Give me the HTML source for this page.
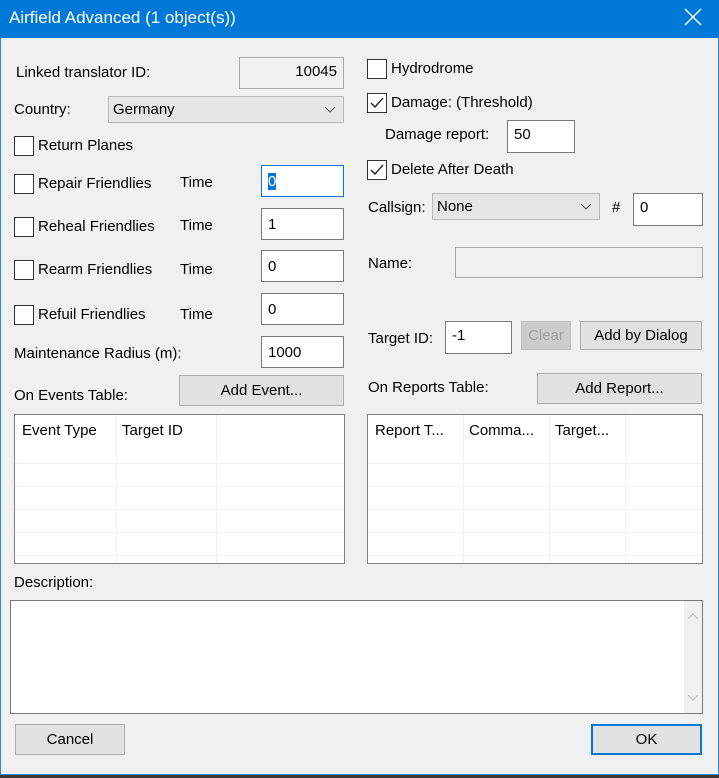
<!DOCTYPE html>
<html><head><meta charset="utf-8"><style>
*{box-sizing:border-box;margin:0;padding:0}
body{width:719px;height:778px;overflow:hidden;background:#3a3a3a;font-family:"Liberation Sans",sans-serif;font-size:15px;color:#000;position:relative}
#dlg{position:absolute;left:0;top:0;width:719px;height:775px;background:#f0f0f0;box-shadow:inset 0 0 0 1px #2b88d8}
#title{position:absolute;left:0;top:0;width:719px;height:38px;background:#0078d7;color:#fff;font-size:17px;line-height:36px;padding-left:9px}
.a{position:absolute;white-space:nowrap}
.cb{position:absolute;width:20px;height:20px;border:1px solid #333;background:#fff}
.cb svg{position:absolute;left:1px;top:1px}
.in{position:absolute;background:#fff;border:1px solid #7a7a7a;padding:7px 6px 0;line-height:18px}
.dis{background:#f0f0f0;border-color:#a8a8a8}
.btn{position:absolute;background:#e1e1e1;border:1px solid #adadad;text-align:center;line-height:30px}
.combo{position:absolute;background:#e5e5e5;border:1px solid #b8b8b8;padding-left:4px;line-height:26px}
.combo svg{position:absolute;right:8px;top:10px}
.tbl{position:absolute;background:#fff;border:1px solid #828282;overflow:hidden}
.vl{position:absolute;top:0;bottom:0;width:1px;background:#f0f0f0}
.hl{position:absolute;left:0;right:0;height:1px;background:#f0f0f0}
</style></head><body>
<div id="dlg">
<div id="title">Airfield Advanced (1 object(s))
<svg style="position:absolute;left:684px;top:8px" width="18" height="18"><path d="M1 1L17 17M17 1L1 17" stroke="#fff" stroke-width="1.5"/></svg></div>

<div class="a" style="left:16px;top:64px">Linked translator ID:</div>
<div class="in dis" style="left:239px;top:57px;width:105px;height:32px;text-align:right;padding-top:5px">10045</div>
<div class="a" style="left:14px;top:101px">Country:</div>
<div class="combo" style="left:108px;top:96px;width:236px;height:27px">Germany<svg width="10" height="6"><path d="M0 0L5 5L10 0" stroke="#555" fill="none"/></svg></div>

<div class="cb" style="left:14px;top:136px"></div><div class="a" style="left:38px;top:137px">Return Planes</div>
<div class="cb" style="left:14px;top:174px"></div><div class="a" style="left:38px;top:175px">Repair Friendlies</div>
<div class="a" style="left:180px;top:174px">Time</div>
<div class="in" style="left:261px;top:165px;width:83px;height:32px;border-color:#0078d7"><span style="background:#0078d7;color:#fff">0</span></div>
<div class="cb" style="left:14px;top:217px"></div><div class="a" style="left:38px;top:218px">Reheal Friendlies</div>
<div class="a" style="left:180px;top:217px">Time</div>
<div class="in" style="left:261px;top:208px;width:83px;height:32px">1</div>
<div class="cb" style="left:14px;top:260px"></div><div class="a" style="left:38px;top:261px">Rearm Friendlies</div>
<div class="a" style="left:180px;top:261px">Time</div>
<div class="in" style="left:261px;top:250px;width:83px;height:32px">0</div>
<div class="cb" style="left:14px;top:305px"></div><div class="a" style="left:38px;top:306px">Refuil Friendlies</div>
<div class="a" style="left:180px;top:306px">Time</div>
<div class="in" style="left:261px;top:293px;width:83px;height:32px">0</div>
<div class="a" style="left:14px;top:345px">Maintenance Radius (m):</div>
<div class="in" style="left:261px;top:336px;width:83px;height:32px">1000</div>
<div class="a" style="left:14px;top:387px">On Events Table:</div>
<div class="btn" style="left:179px;top:375px;width:165px;height:31px">Add Event...</div>
<div class="tbl" style="left:14px;top:414px;width:331px;height:150px">
<div class="vl" style="left:101px"></div><div class="vl" style="left:201px"></div>
<div class="hl" style="top:48px"></div><div class="hl" style="top:71px"></div><div class="hl" style="top:94px"></div><div class="hl" style="top:117px"></div><div class="hl" style="top:140px"></div>
<div class="a" style="left:7px;top:7px">Event Type</div><div class="a" style="left:107px;top:7px">Target ID</div>
</div>

<div class="cb" style="left:367px;top:59px"></div><div class="a" style="left:391px;top:60px">Hydrodrome</div>
<div class="cb" style="left:367px;top:93px"><svg width="16" height="16"><path d="M2 8L6 12L14 3" stroke="#222" stroke-width="1.4" fill="none"/></svg></div><div class="a" style="left:391px;top:94px">Damage: (Threshold)</div>
<div class="a" style="left:385px;top:126px">Damage report:</div>
<div class="in" style="left:507px;top:120px;width:68px;height:33px;padding-top:5px">50</div>
<div class="cb" style="left:367px;top:160px"><svg width="16" height="16"><path d="M2 8L6 12L14 3" stroke="#222" stroke-width="1.4" fill="none"/></svg></div><div class="a" style="left:391px;top:161px">Delete After Death</div>
<div class="a" style="left:368px;top:199px">Callsign:</div>
<div class="combo" style="left:432px;top:193px;width:168px;height:27px">None<svg width="10" height="6"><path d="M0 0L5 5L10 0" stroke="#555" fill="none"/></svg></div>
<div class="a" style="left:612px;top:199px">#</div>
<div class="in" style="left:633px;top:193px;width:70px;height:33px;padding-top:5px">0</div>
<div class="a" style="left:368px;top:255px">Name:</div>
<div class="in dis" style="left:455px;top:247px;width:248px;height:31px"></div>
<div class="a" style="left:368px;top:330px">Target ID:</div>
<div class="in" style="left:445px;top:321px;width:67px;height:33px;padding-top:5px">-1</div>
<div class="btn" style="left:521px;top:321px;width:50px;height:29px;background:#cccccc;border-color:#bfbfbf;color:#a0a0a0;line-height:28px">Clear</div>
<div class="btn" style="left:580px;top:321px;width:122px;height:29px;line-height:28px">Add by Dialog</div>
<div class="a" style="left:368px;top:379px">On Reports Table:</div>
<div class="btn" style="left:537px;top:373px;width:165px;height:31px">Add Report...</div>
<div class="tbl" style="left:367px;top:414px;width:336px;height:150px">
<div class="vl" style="left:95px"></div><div class="vl" style="left:181px"></div><div class="vl" style="left:257px"></div>
<div class="hl" style="top:48px"></div><div class="hl" style="top:71px"></div><div class="hl" style="top:94px"></div><div class="hl" style="top:117px"></div><div class="hl" style="top:140px"></div>
<div class="a" style="left:7px;top:7px">Report T...</div><div class="a" style="left:101px;top:7px">Comma...</div><div class="a" style="left:187px;top:7px">Target...</div>
</div>

<div class="a" style="left:14px;top:574px">Description:</div>
<div class="tbl" style="left:10px;top:600px;width:693px;height:114px;border-color:#7a7a7a">
<div style="position:absolute;right:0;top:0;width:18px;height:112px;background:#f0f0f0"></div>
<svg style="position:absolute;right:4px;top:12px" width="10" height="6"><path d="M0 6L5 1L10 6" stroke="#bbb" fill="none"/></svg>
<svg style="position:absolute;right:4px;top:94px" width="10" height="6"><path d="M0 0L5 5L10 0" stroke="#bbb" fill="none"/></svg>
</div>
<div class="btn" style="left:15px;top:724px;width:110px;height:31px">Cancel</div>
<div class="btn" style="left:591px;top:724px;width:111px;height:31px;border:2px solid #0078d7;line-height:27px">OK</div>
</div>
</body></html>
